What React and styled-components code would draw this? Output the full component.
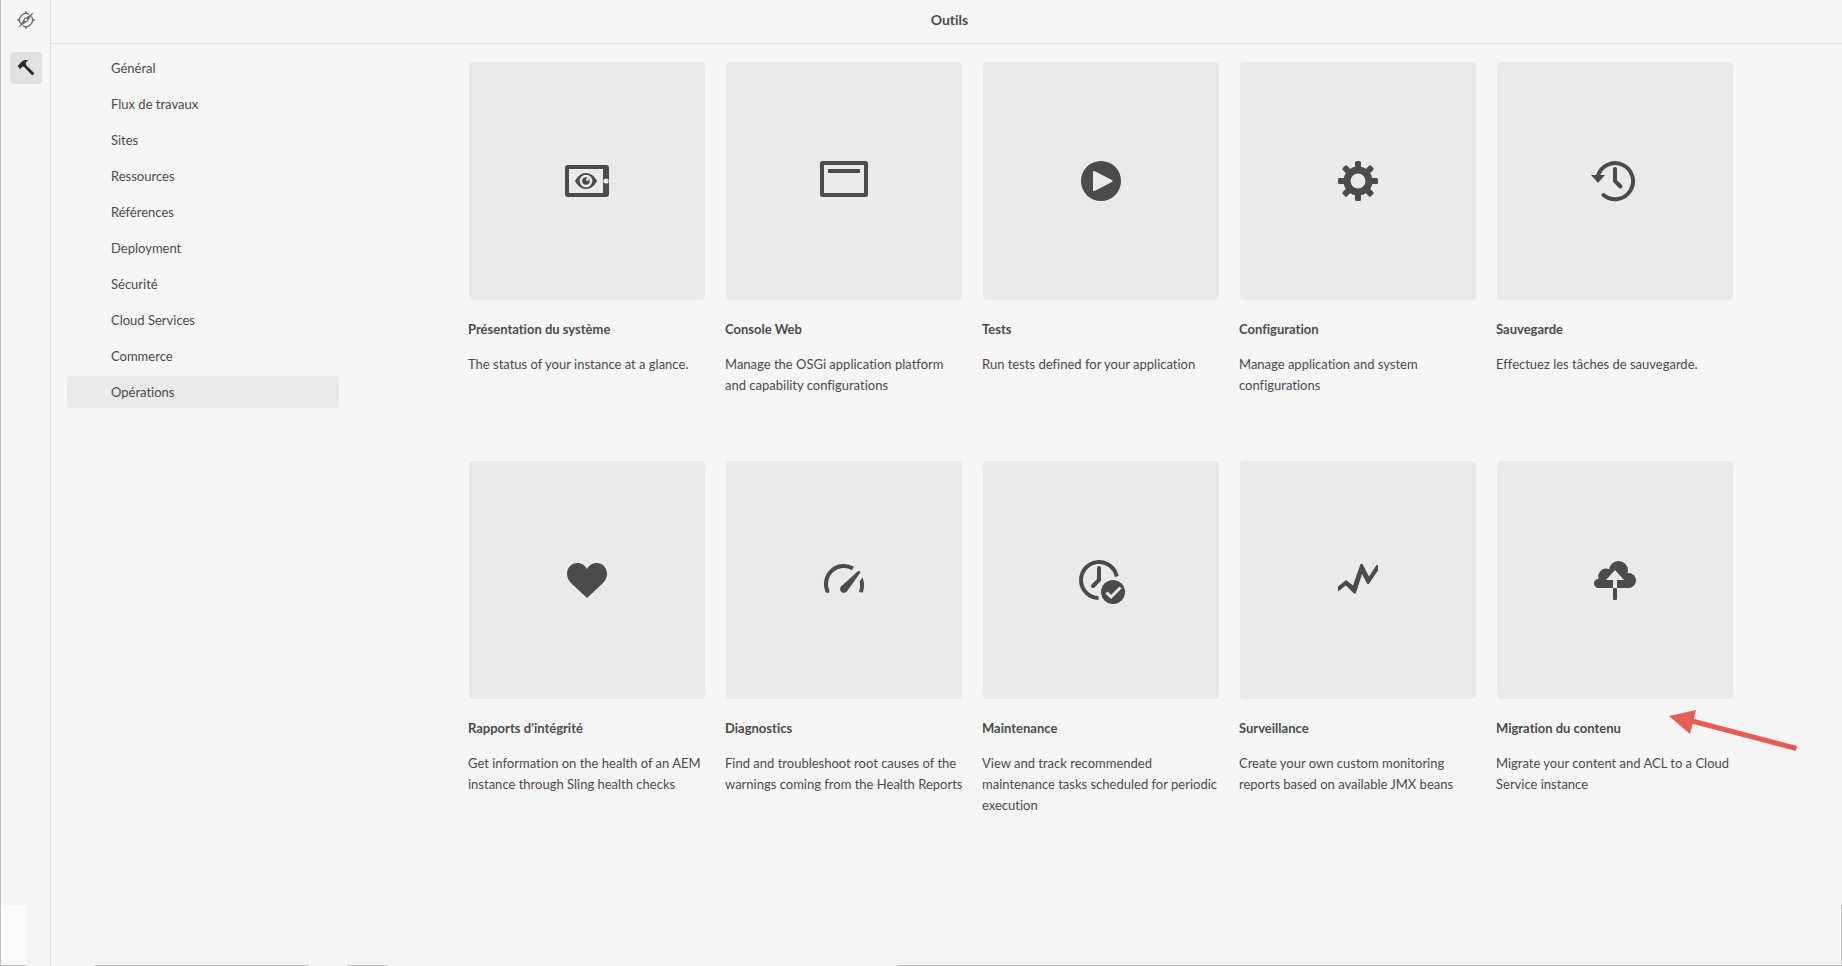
import React from "react";
import styled, { createGlobalStyle } from "styled-components";

const GlobalStyle = createGlobalStyle`
  *, *::before, *::after { box-sizing: border-box; }
  body {
    margin: 0;
    background: #f5f5f5;
    color: #4b4b4b;
    font-family: Lato, "Liberation Sans", sans-serif;
    font-size: 13px;
    font-variant-ligatures: none;
    line-height: 21px;
  }
`;

const Shell = styled.div`
  position: relative;
  display: flex;
  min-height: 100vh;
  border-left: 1px solid #bdbdbd;
  overflow: hidden;
`;

const Rail = styled.nav`
  display: flex;
  flex-direction: column;
  align-items: center;
  gap: 16px;
  flex: none;
  width: 50px;
  padding: 4px 0 0 0;
  border-left: 1px solid #fcfcfc;
  border-right: 1px solid #dfdfdf;
`;

const RailButton = styled.button`
  display: flex;
  align-items: center;
  justify-content: center;
  width: 32px;
  height: 32px;
  padding: 0;
  border: 0;
  border-radius: 4px;
  background: ${(p) => (p.$active ? "#e1e1e1" : "transparent")};
  color: ${(p) => (p.$active ? "#2c2c2c" : "#6e6e6e")};
  cursor: pointer;
`;

const Page = styled.div`
  flex: 1;
  min-width: 0;
`;

const Header = styled.header`
  display: flex;
  align-items: center;
  justify-content: center;
  height: 44px;
  padding: 0 0 4px 6px;
  border-bottom: 1px solid #dfdfdf;
`;

const HeaderTitle = styled.h1`
  margin: 0;
  font-size: 14px;
  font-weight: 700;
`;

const Body = styled.div`
  display: flex;
  align-items: flex-start;
  padding: 8px 108px 48px 16px;
`;

const SideList = styled.ul`
  display: flex;
  flex-direction: column;
  gap: 4px;
  flex: none;
  width: 272px;
  margin: 0 129px 0 0;
  padding: 0;
  list-style: none;
`;

const SideLink = styled.a`
  display: block;
  padding: 6px 12px 5px 44px;
  border-radius: 4px;
  background: ${(p) => (p.$active ? "#eaeaea" : "transparent")};
  color: inherit;
  text-decoration: none;
`;

const Grid = styled.main`
  display: grid;
  grid-template-columns: repeat(5, minmax(0, 1fr));
  column-gap: 19px;
  row-gap: 65px;
  flex: 1;
  padding-top: 10px;
`;

const Card = styled.a`
  position: relative;
  display: block;
  color: inherit;
  text-decoration: none;
`;

const Tile = styled.div`
  display: flex;
  align-items: center;
  justify-content: center;
  aspect-ratio: 118 / 119;
  margin: 0 1px;
  border-radius: 4px;
  background: #eaeaea;
`;

const CardTitle = styled.h2`
  margin: 19px 0 14px;
  font-size: 13px;
  font-weight: 700;
`;

const CardText = styled.p`
  margin: 0;
`;

const Pointer = styled.svg`
  position: absolute;
  top: 248px;
  left: 172px;
  pointer-events: none;
`;

const Corner = styled.div`
  position: absolute;
  left: 1px;
  bottom: 0;
  width: 24px;
  height: 61px;
  background: #fbfbfb;
`;

const RightEdge = styled.div`
  position: absolute;
  right: 0;
  bottom: 0;
  width: 2px;
  height: 61px;
  border-left: 1px solid #ffffff;
  border-right: 1px solid #bdbdbd;
`;

const BottomEdge = styled.div`
  position: absolute;
  left: 0;
  right: 0;
  bottom: 0;
  display: grid;
  grid-template-columns: 25px 68px 215px 38px 41px 510px 1fr;
  height: 2px;
`;

const EdgeRun = styled.span`
  grid-column: ${(p) => p.$column};
  border-top: 1px solid #ffffff;
  border-bottom: 1px solid #bdbdbd;
`;

function CompassIcon() {
  return (
    <svg width="18" height="18" viewBox="0 0 18 18" fill="none" stroke="currentColor" aria-hidden="true">
      <path d="M3.5 12.5A6.6 6.6 0 0 1 12 3.1M14.5 5.5A6.6 6.6 0 0 1 6 14.900" strokeWidth="1.4" />
      <path d="M9 0.2V2.4M9 15.6V17.8M0.2 9H2.4M15.6 9H17.8" strokeWidth="1.6" />
      <path d="M16.8 1.2L10.6 10.6L1.2 16.8L7.4 7.400Z" fill="currentColor" stroke="none" />
      <circle cx="9" cy="9" r="1.2" fill="#f5f5f5" stroke="none" />
    </svg>
  );
}

function HammerIcon() {
  return (
    <svg width="18" height="18" viewBox="0 0 18 18" fill="currentColor" aria-hidden="true">
      <path d="M0.7 6.9L4.8 2.6C6.6 0.8 9.3 0.3 12 1.7C10.2 1.8 9 2.5 8.8 4.2L9.2 6.3L17.3 14.2L15.3 16.4L7.2 8.1L5.8 7.5L4.6 8.2L4.2 9.2L3 10Z" />
    </svg>
  );
}

const GEAR_ANGLES = [0, 45, 90, 135, 180, 225, 270, 315];

const drawings = {
  overview: (
    <>
      <path
        fillRule="evenodd"
        d="M5 8H43A3 3 0 0 1 46 11V37A3 3 0 0 1 43 40H5A3 3 0 0 1 2 37V11A3 3 0 0 1 5 8ZM6 12V36H40V12Z"
      />
      <circle cx="43" cy="24" r="2.6" fill="#eaeaea" />
      <path d="M12 24C14.5 19 18.5 16 23 16S31.5 19 34 24C31.5 29 27.5 32 23 32S14.5 29 12 24Z" />
      <circle cx="23" cy="24" r="6.3" fill="#eaeaea" />
      <circle cx="23" cy="24" r="3.8" />
      <circle cx="24.6" cy="22.3" r="1.6" fill="#eaeaea" />
    </>
  ),
  web: (
    <>
      <rect x="2" y="6" width="44" height="32" rx="0.5" fill="none" stroke="currentColor" strokeWidth="4" />
      <rect x="8" y="12" width="32" height="4" rx="1" />
    </>
  ),
  play: (
    <>
      <circle cx="24" cy="24" r="20" />
      <path d="M17 15L34.5 24L17 33Z" fill="#eaeaea" stroke="#eaeaea" strokeWidth="2" strokeLinejoin="round" />
    </>
  ),
  gear: (
    <>
      <circle cx="24" cy="24" r="11" fill="none" stroke="currentColor" strokeWidth="7" />
      {GEAR_ANGLES.map((angle) => (
        <rect key={angle} x="21" y="4" width="6" height="9" rx="1.5" transform={`rotate(${angle} 24 24)`} />
      ))}
    </>
  ),
  history: (
    <>
      <g fill="none" stroke="currentColor" strokeWidth="4" strokeLinecap="round" strokeLinejoin="round">
        <path d="M6.8 19A18 18 0 1 1 12.5 38" />
        <path d="M24 12V24L29.5 29.5" />
      </g>
      <path d="M0 18H14L7 26Z" />
    </>
  ),
  heart: (
    <path d="M24 42L9 28C6 25 4 22 4 18C4 11.5 8.5 7 14.5 7C18.5 7 22 9.3 24 13C26 9.3 29.5 7 33.5 7C39.5 7 44 11.5 44 18C44 22 42 25 39 28Z" />
  ),
  gauge: (
    <>
      <path d="M7.6 35.5A18 18 0 0 1 33 12.4" fill="none" stroke="currentColor" strokeWidth="4" />
      <circle cx="7.5" cy="35" r="1.9" />
      <path d="M42.5 21.5C44.5 26 44.6 31.5 42.9 36.2C42 37 39.5 36.5 39.1 35.2C40.4 31.5 40.3 28.5 39.6 25.5Z" />
      <path d="M38.2 15C39.5 14.5 40.8 15.6 40 17L27 35.2C25.5 37 22.5 37.3 21 35.5C19.5 34 19.8 31.5 21.2 30.2Z" />
    </>
  ),
  maintenance: (
    <>
      <g fill="none" stroke="currentColor" strokeWidth="4">
        <path d="M39.7 20.5A18 18 0 1 0 21.5 42" />
        <path d="M22 12V24L16 30" strokeLinecap="round" strokeLinejoin="round" />
      </g>
      <circle cx="36" cy="36" r="12" />
      <path d="M29.5 36.5L34 41L43.5 31.5" fill="none" stroke="#eaeaea" strokeWidth="3" />
    </>
  ),
  monitoring: (
    <path d="M4 30.5L12 24L19 29.5L26.5 8H28.5L35 20.5L42.5 9H44V14.5L34.8 28H33.3L28 18L21.8 37.5H20L11.8 29.5L4 35.5Z" />
  ),
  cloud: (
    <>
      <circle cx="7.5" cy="27.5" r="4.5" />
      <circle cx="15" cy="20" r="7.5" />
      <circle cx="27.5" cy="14.5" r="9.5" />
      <circle cx="37.5" cy="24.5" r="7.5" />
      <rect x="7.5" y="18" width="30" height="14" />
      <path d="M24 14L33 24H26V32H22V24H15Z" fill="#eaeaea" />
      <rect x="22" y="32" width="4" height="12" rx="1" />
    </>
  ),
};

function TileIcon({ name }) {
  return (
    <svg width="48" height="48" viewBox="0 0 48 48" fill="currentColor" aria-hidden="true">
      {drawings[name]}
    </svg>
  );
}

const sections = [
  "Général",
  "Flux de travaux",
  "Sites",
  "Ressources",
  "Références",
  "Deployment",
  "Sécurité",
  "Cloud Services",
  "Commerce",
  "Opérations",
];

const tools = [
  { icon: "overview", title: "Présentation du système", text: "The status of your instance at a glance." },
  { icon: "web", title: "Console Web", text: "Manage the OSGi application platform and capability configurations" },
  { icon: "play", title: "Tests", text: "Run tests defined for your application" },
  { icon: "gear", title: "Configuration", text: "Manage application and system configurations" },
  { icon: "history", title: "Sauvegarde", text: "Effectuez les tâches de sauvegarde." },
  { icon: "heart", title: "Rapports d’intégrité", text: "Get information on the health of an AEM instance through Sling health checks" },
  { icon: "gauge", title: "Diagnostics", text: "Find and troubleshoot root causes of the warnings coming from the Health Reports" },
  { icon: "maintenance", title: "Maintenance", text: "View and track recommended maintenance tasks scheduled for periodic execution" },
  { icon: "monitoring", title: "Surveillance", text: "Create your own custom monitoring reports based on available JMX beans" },
  { icon: "cloud", title: "Migration du contenu", text: "Migrate your content and ACL to a Cloud Service instance", pointer: true },
];

export default function App() {
  return (
    <>
      <GlobalStyle />
      <Shell>
        <Rail>
          <RailButton type="button" aria-label="Navigation">
            <CompassIcon />
          </RailButton>
          <RailButton type="button" aria-label="Outils" $active>
            <HammerIcon />
          </RailButton>
        </Rail>
        <Page>
          <Header>
            <HeaderTitle>Outils</HeaderTitle>
          </Header>
          <Body>
            <SideList>
              {sections.map((name) => (
                <li key={name}>
                  <SideLink href="#" $active={name === "Opérations"}>
                    {name}
                  </SideLink>
                </li>
              ))}
            </SideList>
            <Grid>
              {tools.map((tool) => (
                <Card href="#" key={tool.title}>
                  <Tile>
                    <TileIcon name={tool.icon} />
                  </Tile>
                  <CardTitle>{tool.title}</CardTitle>
                  <CardText>{tool.text}</CardText>
                  {tool.pointer && (
                    <Pointer width="132" height="44" viewBox="0 0 132 44" aria-hidden="true">
                      <path d="M24 12L128.5 39.5" stroke="#e95c53" strokeWidth="5" />
                      <path d="M1 7L28 1L22 25Z" fill="#e95c53" />
                    </Pointer>
                  )}
                </Card>
              ))}
            </Grid>
          </Body>
        </Page>
        <Corner />
        <RightEdge />
        <BottomEdge>
          <EdgeRun $column={1} />
          <EdgeRun $column={3} />
          <EdgeRun $column={5} />
          <EdgeRun $column={7} />
        </BottomEdge>
      </Shell>
    </>
  );
}
